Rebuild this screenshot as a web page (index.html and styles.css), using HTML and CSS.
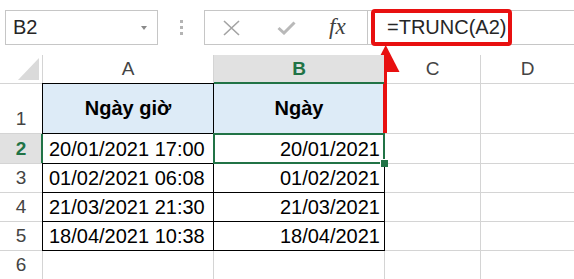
FILE: index.html
```html
<!DOCTYPE html>
<html lang="vi">
<head>
  <meta charset="UTF-8">
  <meta name="viewport" content="width=device-width, initial-scale=1">
  <title>TRUNC</title>
  <link rel="stylesheet" href="styles.css">
</head>
<body>
  <div class="toolbar">
    <div class="name-box">
      <span>B2</span>
      <span class="caret"></span>
    </div>
    <div class="grip"><i></i><i></i><i></i></div>
    <div class="formula-bar">
      <div class="fx-buttons">
        <svg class="icon-x" width="17" height="16" viewBox="0 0 17 16">
          <path d="M1 1 L16 15 M16 1 L1 15" stroke="#a3a3a3" stroke-width="1.6" fill="none"/>
        </svg>
        <svg class="icon-check" width="19" height="14" viewBox="0 0 19 14">
          <path d="M1.5 7 L7 12 L17.5 1.5" stroke="#b9b9b9" stroke-width="3" fill="none"/>
        </svg>
        <span class="fx">fx</span>
      </div>
      <div class="formula-input">
        <span class="formula-text">=TRUNC(A2)</span>
      </div>
    </div>
  </div>

  <div class="sheet">
    <div class="corner"><div class="corner-tri"></div></div>
    <div class="col-head">A</div>
    <div class="col-head active">B</div>
    <div class="col-head">C</div>
    <div class="col-head">D</div>

    <div class="row-head tall">1</div>
    <div class="cell tbl title">Ngày giờ</div>
    <div class="cell tbl title">Ngày</div>
    <div class="cell"></div>
    <div class="cell"></div>

    <div class="row-head active">2</div>
    <div class="cell tbl">20/01/2021 17:00</div>
    <div class="cell tbl num sel">20/01/2021</div>
    <div class="cell"></div>
    <div class="cell"></div>

    <div class="row-head">3</div>
    <div class="cell tbl">01/02/2021 06:08</div>
    <div class="cell tbl num">01/02/2021</div>
    <div class="cell"></div>
    <div class="cell"></div>

    <div class="row-head">4</div>
    <div class="cell tbl">21/03/2021 21:30</div>
    <div class="cell tbl num">21/03/2021</div>
    <div class="cell"></div>
    <div class="cell"></div>

    <div class="row-head">5</div>
    <div class="cell tbl">18/04/2021 10:38</div>
    <div class="cell tbl num">18/04/2021</div>
    <div class="cell"></div>
    <div class="cell"></div>

    <div class="row-head">6</div>
    <div class="cell"></div>
    <div class="cell"></div>
    <div class="cell"></div>
    <div class="cell"></div>
  </div>

  <svg class="arrow" width="574" height="279" viewBox="0 0 574 279">
    <polygon points="372,72 399.5,72 385.7,45" fill="#e81010"/>
    <rect x="383" y="70" width="4" height="63" fill="#e81010"/>
  </svg>
</body>
</html>
```

FILE: styles.css
```css
* {
  box-sizing: border-box;
}

body {
  margin: 0;
  width: 574px;
  height: 279px;
  overflow: hidden;
  position: relative;
  background: #fff;
  font-family: "Liberation Sans", Arial, sans-serif;
  color: #000;
}

/* formula toolbar */
.toolbar {
  display: flex;
  align-items: center;
  padding-top: 10px;
  height: 45px;
}

.name-box {
  margin-left: 5px;
  width: 153px;
  height: 35px;
  border: 1px solid #c6c6c6;
  display: flex;
  align-items: center;
  justify-content: space-between;
  padding: 0 10px 0 7px;
  font-size: 20px;
  color: #262626;
}

.caret {
  width: 0;
  height: 0;
  border-left: 3.5px solid transparent;
  border-right: 3.5px solid transparent;
  border-top: 4px solid #8a8a8a;
}

.grip {
  display: flex;
  flex-direction: column;
  gap: 3px;
  margin: 0 21px 0 22px;
}

.grip i {
  display: block;
  width: 3px;
  height: 3px;
  background: #b4b4b4;
}

.formula-bar {
  flex: 1;
  display: flex;
  height: 35px;
  border: 1px solid #c6c6c6;
  margin-right: -20px;
}

.fx-buttons {
  width: 163px;
  border-right: 1px solid #c6c6c6;
  display: flex;
  align-items: center;
  padding-left: 18px;
}

.icon-check {
  margin-left: 37px;
}

.fx {
  margin-left: 33px;
  font-family: "Liberation Serif", "Times New Roman", serif;
  font-style: italic;
  font-size: 23px;
  color: #404040;
  margin-top: -2px;
}

.formula-input {
  flex: 1;
  display: flex;
  align-items: center;
  padding-left: 3px;
}

.formula-text {
  width: 141px;
  height: 37px;
  flex-shrink: 0;
  border: 4px solid #e81010;
  border-radius: 4px;
  padding: 0 0 0 12px;
  display: flex;
  align-items: center;
  font-size: 20px;
  color: #262626;
  background: #fff;
}

/* sheet grid */
.sheet {
  margin-top: 10px;
  display: grid;
  grid-template-columns: 42px 170px 170px 95px 1fr;
  grid-template-rows: 28px 49px 29px 28px 28px 28px 28px;
  gap: 1px;
  background: #d4d4d4;
}

.corner {
  background: #fff;
  display: flex;
  justify-content: flex-end;
  align-items: flex-end;
  padding: 0 3px 3px 0;
}

.corner-tri {
  width: 21px;
  height: 22px;
  background: #dadada;
  clip-path: polygon(100% 0, 100% 100%, 0 100%);
}

.col-head {
  background: #fff;
  display: flex;
  align-items: center;
  justify-content: center;
  font-size: 19px;
  color: #444;
}

.col-head.active {
  position: relative;
  z-index: 2;
  background: #e1e1e1;
  color: #217346;
  font-weight: bold;
  box-shadow: inset 0 -1px 0 #217346, 0 1px 0 #217346;
}

.row-head {
  background: #fff;
  display: flex;
  align-items: center;
  justify-content: center;
  font-size: 19px;
  color: #444;
}

.row-head.tall {
  align-items: flex-end;
  padding-bottom: 3px;
}

.row-head.active {
  position: relative;
  z-index: 2;
  background: #e1e1e1;
  color: #217346;
  font-weight: bold;
  box-shadow: inset -1px 0 0 #217346, 1px 0 0 #217346;
}

.cell {
  background: #fff;
  display: flex;
  align-items: center;
  padding: 1px 4px 0 6px;
  font-size: 20px;
  white-space: nowrap;
}

.tbl {
  box-shadow: 0 0 0 1px #000;
}

.title {
  background: #ddebf7;
  font-weight: bold;
  justify-content: center;
  padding: 0;
}

.num {
  justify-content: flex-end;
}

.sel {
  position: relative;
  z-index: 1;
  box-shadow: inset 0 0 0 1px #217346, 0 0 0 1px #217346;
}

.sel::after {
  content: "";
  position: absolute;
  right: -4px;
  bottom: -4px;
  width: 7px;
  height: 7px;
  background: #217346;
  border-left: 1px solid #fff;
  border-top: 1px solid #fff;
}

.arrow {
  position: absolute;
  left: 0;
  top: 0;
  pointer-events: none;
}
```
